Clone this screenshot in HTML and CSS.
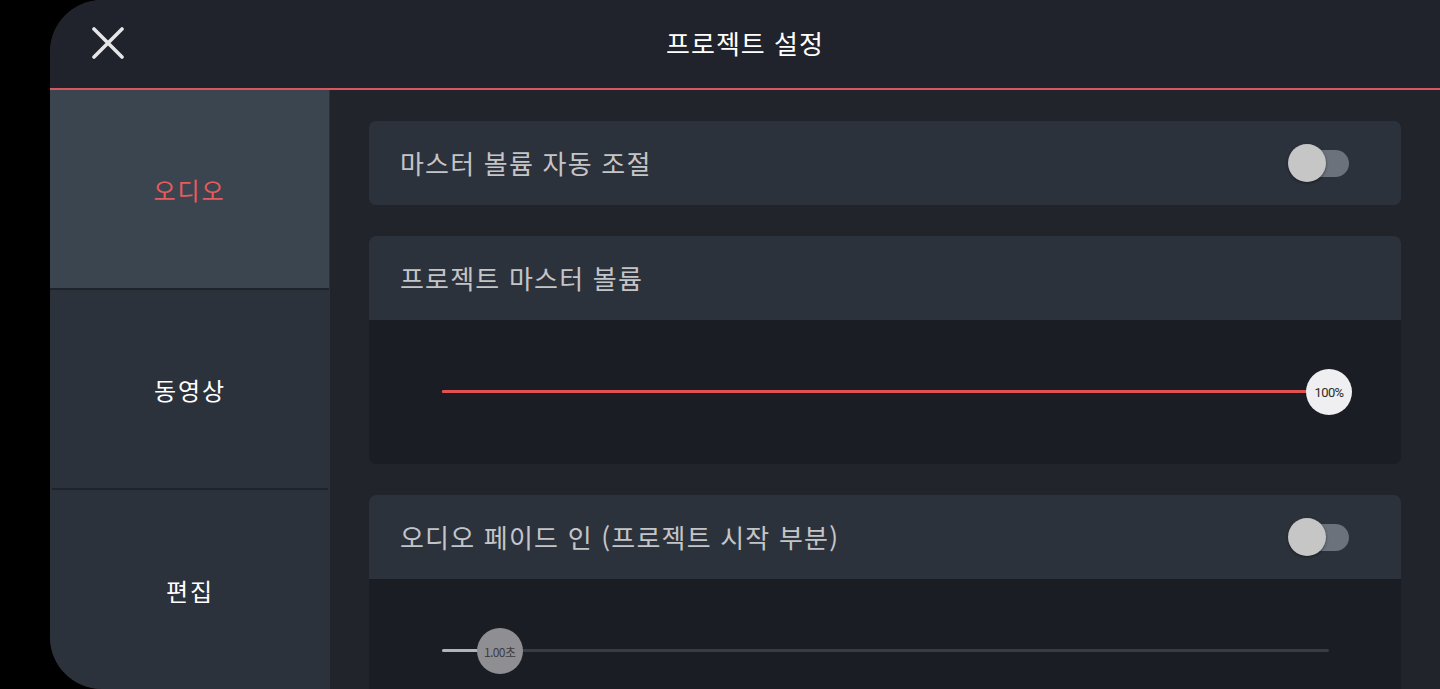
FILE: index.html
```html
<!DOCTYPE html>
<html lang="ko">
<head>
<meta charset="utf-8">
<title>프로젝트 설정</title>
<link rel="stylesheet" href="styles.css">
</head>
<body>
<div class="app">
  <header class="topbar">
    <div class="close-wrap">
      <svg class="close" width="32" height="32" viewBox="0 0 32 32"><path d="M2 2 L30 30 M30 2 L2 30" stroke="#e6e6e8" stroke-width="3.6" stroke-linecap="round" fill="none"/></svg>
    </div>
    <h1 class="title">프로젝트 설정</h1>
    <div></div>
  </header>
  <div class="main">
    <nav class="sidebar">
      <div class="nav-item active">오디오</div>
      <div class="nav-item">동영상</div>
      <div class="nav-item last">편집</div>
    </nav>
    <section class="content">
      <div class="card">
        <div class="card-head">
          <span class="label">마스터 볼륨 자동 조절</span>
          <div class="toggle"><div class="knob"></div></div>
        </div>
      </div>
      <div class="card">
        <div class="card-head">
          <span class="label">프로젝트 마스터 볼륨</span>
        </div>
        <div class="card-body">
          <div class="track red">
            <div class="fill red-fill" style="width:100%"></div>
            <div class="thumb white" style="left:100%">100%</div>
          </div>
        </div>
      </div>
      <div class="card">
        <div class="card-head">
          <span class="label">오디오 페이드 인 (프로젝트 시작 부분)</span>
          <div class="toggle"><div class="knob"></div></div>
        </div>
        <div class="card-body">
          <div class="track gray">
            <div class="fill gray-fill" style="width:6.5%"></div>
            <div class="thumb grey" style="left:6.5%">1.00초</div>
          </div>
        </div>
      </div>
    </section>
  </div>
</div>
</body>
</html>
```
FILE: styles.css
```css
* { box-sizing: border-box; }
html, body { margin: 0; padding: 0; }
body {
  background: #000;
  width: 1440px;
  height: 689px;
  overflow: hidden;
  font-family: "Noto Sans CJK KR", "Noto Sans", sans-serif;
}
.app {
  margin-left: 50px;
  height: 689px;
  background: #202329;
  border-radius: 52px 0 0 52px;
  overflow: hidden;
  display: flex;
  flex-direction: column;
}
.topbar {
  height: 90px;
  flex: none;
  background: #20232b;
  border-bottom: 2px solid #d9585d;
  display: grid;
  grid-template-columns: 1fr auto 1fr;
  align-items: center;
}
.close-wrap {
  padding-left: 42px;
  display: flex;
  align-items: center;
  padding-bottom: 2px;
}
.close { display: block; }
.title {
  margin: 0;
  color: #ffffff;
  font-size: 26px;
  font-weight: 400;
  letter-spacing: 1px;
  padding-bottom: 4px;
}
.main {
  flex: 1;
  display: flex;
  min-height: 0;
}
.sidebar {
  width: 280px;
  flex: none;
  background: #2c323b;
  display: flex;
  flex-direction: column;
}
.nav-item {
  height: 200px;
  flex: none;
  display: flex;
  align-items: center;
  justify-content: center;
  color: #ffffff;
  font-size: 24px;
  letter-spacing: 2px;
  border-bottom: 2px solid #1f242b;
  margin: 0 2px;
}
.nav-item.active {
  background: #3a4550;
  color: #e65c5c;
  margin: 0 1px 0 0;
}
.nav-item.last { border-bottom: none; }
.content {
  flex: 1;
  padding: 31px 39px 0 39px;
  display: flex;
  flex-direction: column;
  gap: 31px;
  background: #21242b;
}
.card {
  border-radius: 7px;
  overflow: hidden;
  background: #1b1d24;
  flex: none;
}
.card-head {
  height: 84px;
  background: #2c323b;
  display: flex;
  align-items: center;
  justify-content: space-between;
  padding: 0 52px 0 31px;
}
.label {
  color: #c4c5c8;
  font-size: 26px;
  letter-spacing: 1.2px;
  padding-bottom: 2px;
}
.toggle {
  width: 59px;
  height: 27px;
  border-radius: 14px;
  background: #6b727b;
  position: relative;
}
.knob {
  position: absolute;
  left: -2px;
  top: -6px;
  width: 38px;
  height: 38px;
  border-radius: 50%;
  background: #c6c6c6;
  box-shadow: 0 1px 3px rgba(0,0,0,0.45);
}
.card-body {
  height: 144px;
  display: flex;
  align-items: center;
  padding: 0 72px 2px 73px;
}
.track {
  flex: 1;
  height: 3px;
  position: relative;
  border-radius: 2px;
}
.track.red { background: #e05252; }
.track.gray { background: #3a3c43; }
.fill { height: 100%; border-radius: 2px; }
.red-fill { background: #e05252; }
.gray-fill { background: #b3b3b8; }
.thumb {
  position: absolute;
  top: 50%;
  width: 46px;
  height: 46px;
  margin-left: -23px;
  margin-top: -22px;
  border-radius: 50%;
  display: flex;
  align-items: center;
  justify-content: center;
  font-size: 13px;
  letter-spacing: -0.6px;
  font-family: "Roboto", "Noto Sans CJK KR", sans-serif;
}
.thumb.white { background: #efeff1; color: #2a2a2a; }
.thumb.grey { background: #8f8e93; color: #3d3d40; font-size: 12px; font-family: "Noto Sans CJK KR", sans-serif; }
```
